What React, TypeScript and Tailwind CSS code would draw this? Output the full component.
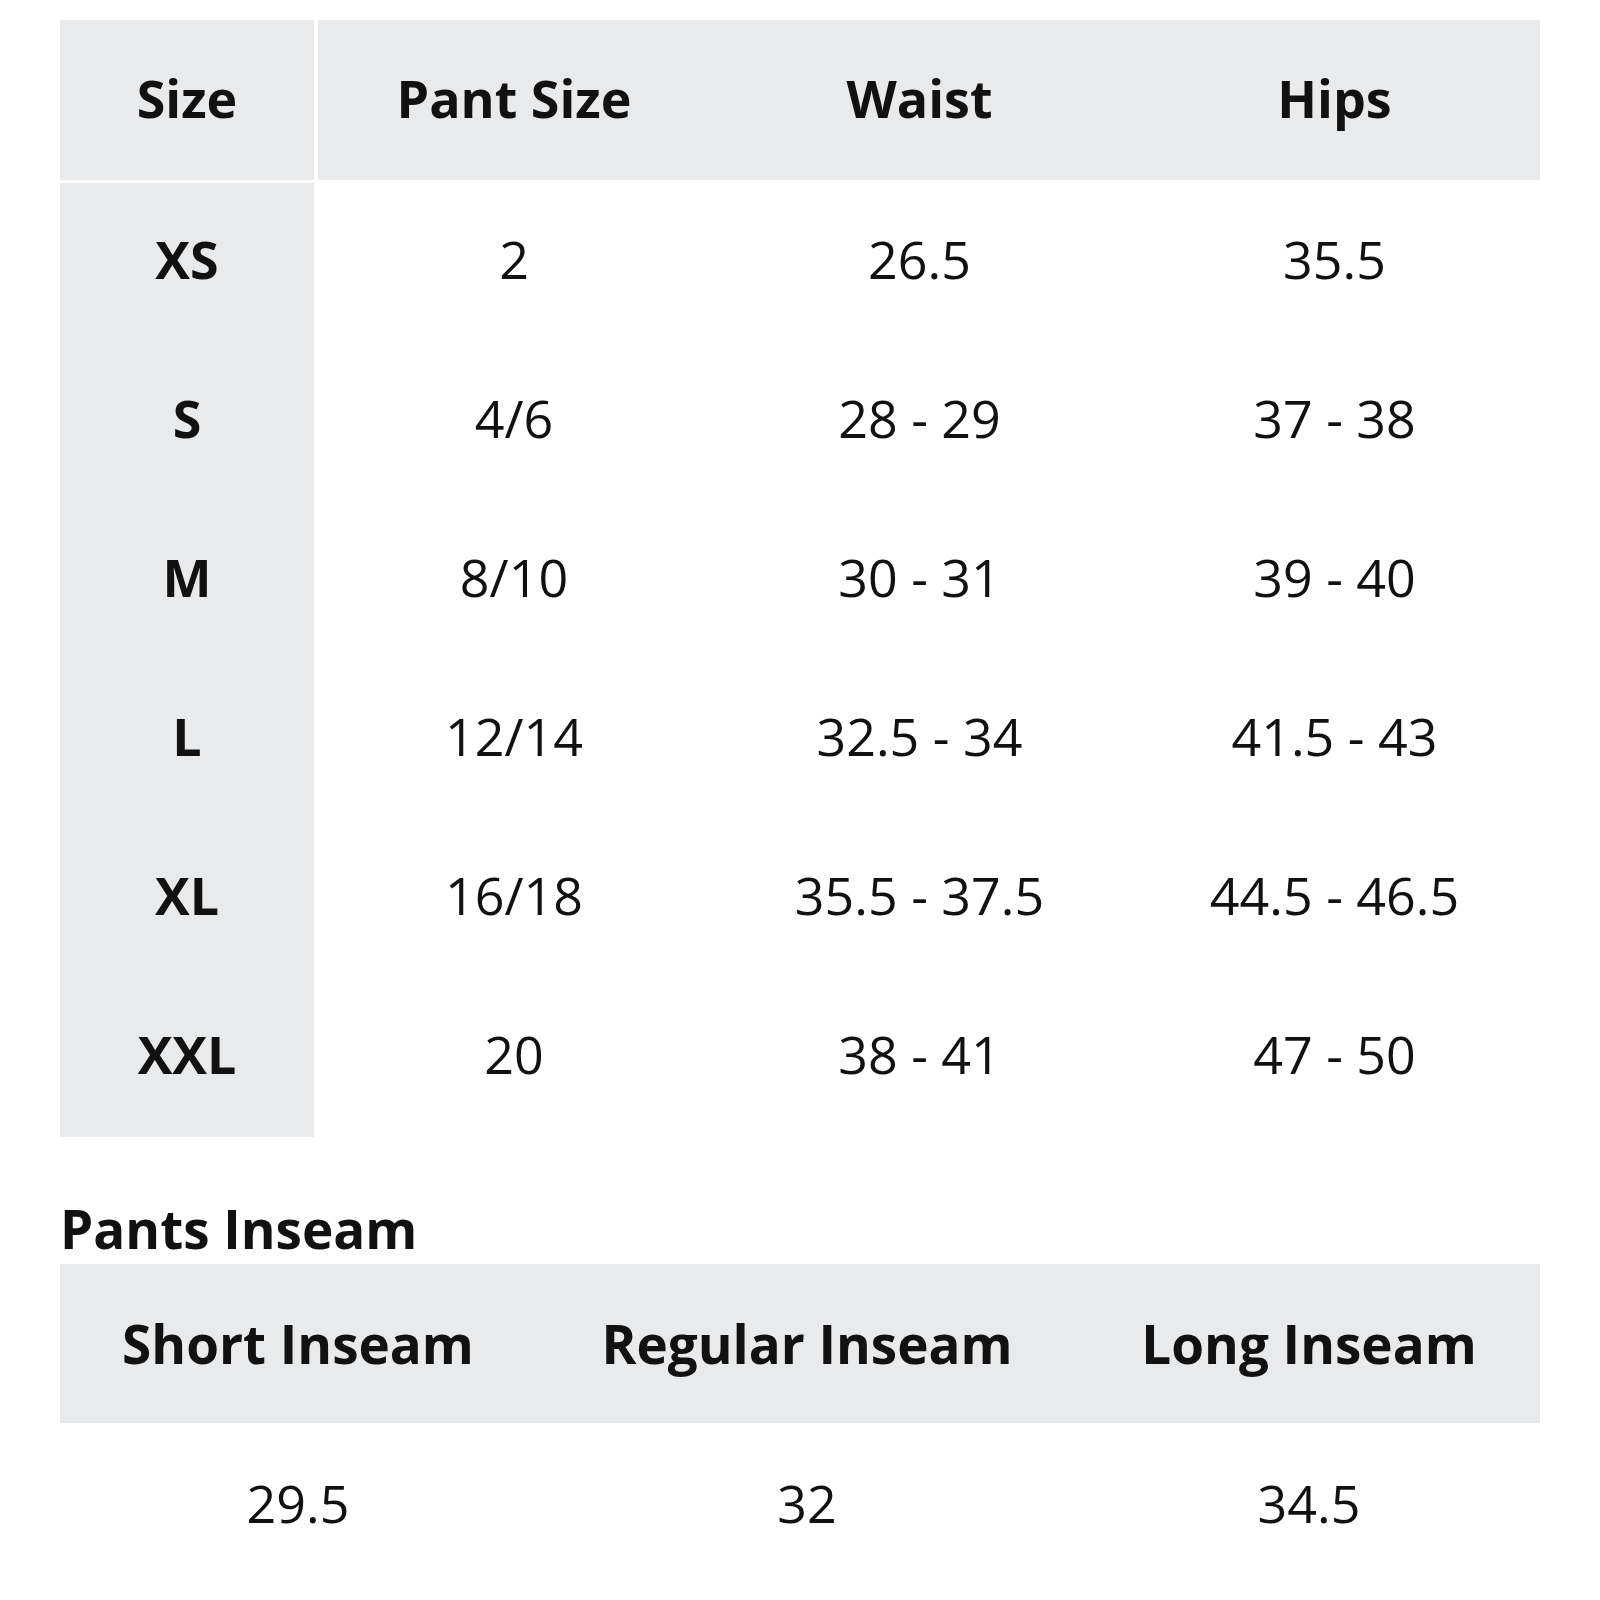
const sizes = [
  { size: "XS", pant: "2", waist: "26.5", hips: "35.5" },
  { size: "S", pant: "4/6", waist: "28 - 29", hips: "37 - 38" },
  { size: "M", pant: "8/10", waist: "30 - 31", hips: "39 - 40" },
  { size: "L", pant: "12/14", waist: "32.5 - 34", hips: "41.5 - 43" },
  { size: "XL", pant: "16/18", waist: "35.5 - 37.5", hips: "44.5 - 46.5" },
  { size: "XXL", pant: "20", waist: "38 - 41", hips: "47 - 50" },
];

const inseams = [
  { label: "Short Inseam", value: "29.5", width: "w-[476px]" },
  { label: "Regular Inseam", value: "32", width: "w-[542px]" },
  { label: "Long Inseam", value: "34.5", width: "w-[462px]" },
];

const App = () => {
  return (
    <div
      className="w-[1600px] h-[1600px] bg-white pt-[20px] pl-[60px] text-[#111111]"
      style={{ fontFamily: '"Open Sans", "Noto Sans", sans-serif' }}
    >
      {/* size chart */}
      <div className="flex w-[1480px] gap-[4px]">
        <div className="flex w-[254px] flex-col gap-[3px]">
          <div className="flex h-[160px] items-center justify-center bg-[#e9eaec] pb-[4px] text-[52px] font-bold leading-none">
            Size
          </div>
          <div className="flex flex-col bg-[#e9eaec]">
            {sizes.map((row) => (
              <div
                key={row.size}
                className="flex h-[159px] items-center justify-center pb-[8px] text-[52px] font-bold leading-none"
              >
                {row.size}
              </div>
            ))}
          </div>
        </div>

        <div className="flex flex-1 flex-col gap-[3px]">
          <div className="flex h-[160px] items-center bg-[#e9eaec] pb-[4px] text-[52px] font-bold leading-none">
            <div className="w-[392px] text-center">Pant Size</div>
            <div className="w-[419px] text-center">Waist</div>
            <div className="flex-1 text-center">Hips</div>
          </div>
          <div className="flex flex-col">
            {sizes.map((row) => (
              <div
                key={row.size}
                className="flex h-[159px] items-center pb-[8px] text-[52px] font-normal leading-none"
              >
                <div className="w-[392px] text-center">{row.pant}</div>
                <div className="w-[419px] text-center">{row.waist}</div>
                <div className="flex-1 text-center">{row.hips}</div>
              </div>
            ))}
          </div>
        </div>
      </div>

      {/* inseam */}
      <h2 className="mt-[65px] text-[53px] font-bold leading-none">Pants Inseam</h2>
      <div className="mt-[9px] flex w-[1480px] flex-col">
        <div className="flex h-[159px] items-center bg-[#e9eaec] text-[53px] font-bold leading-none">
          {inseams.map((c) => (
            <div key={c.label} className={`${c.width} text-center`}>
              {c.label}
            </div>
          ))}
        </div>
        <div className="flex h-[159px] items-center text-[52px] font-normal leading-none">
          {inseams.map((c) => (
            <div key={c.label} className={`${c.width} text-center`}>
              {c.value}
            </div>
          ))}
        </div>
      </div>
    </div>
  );
};

export default App;
